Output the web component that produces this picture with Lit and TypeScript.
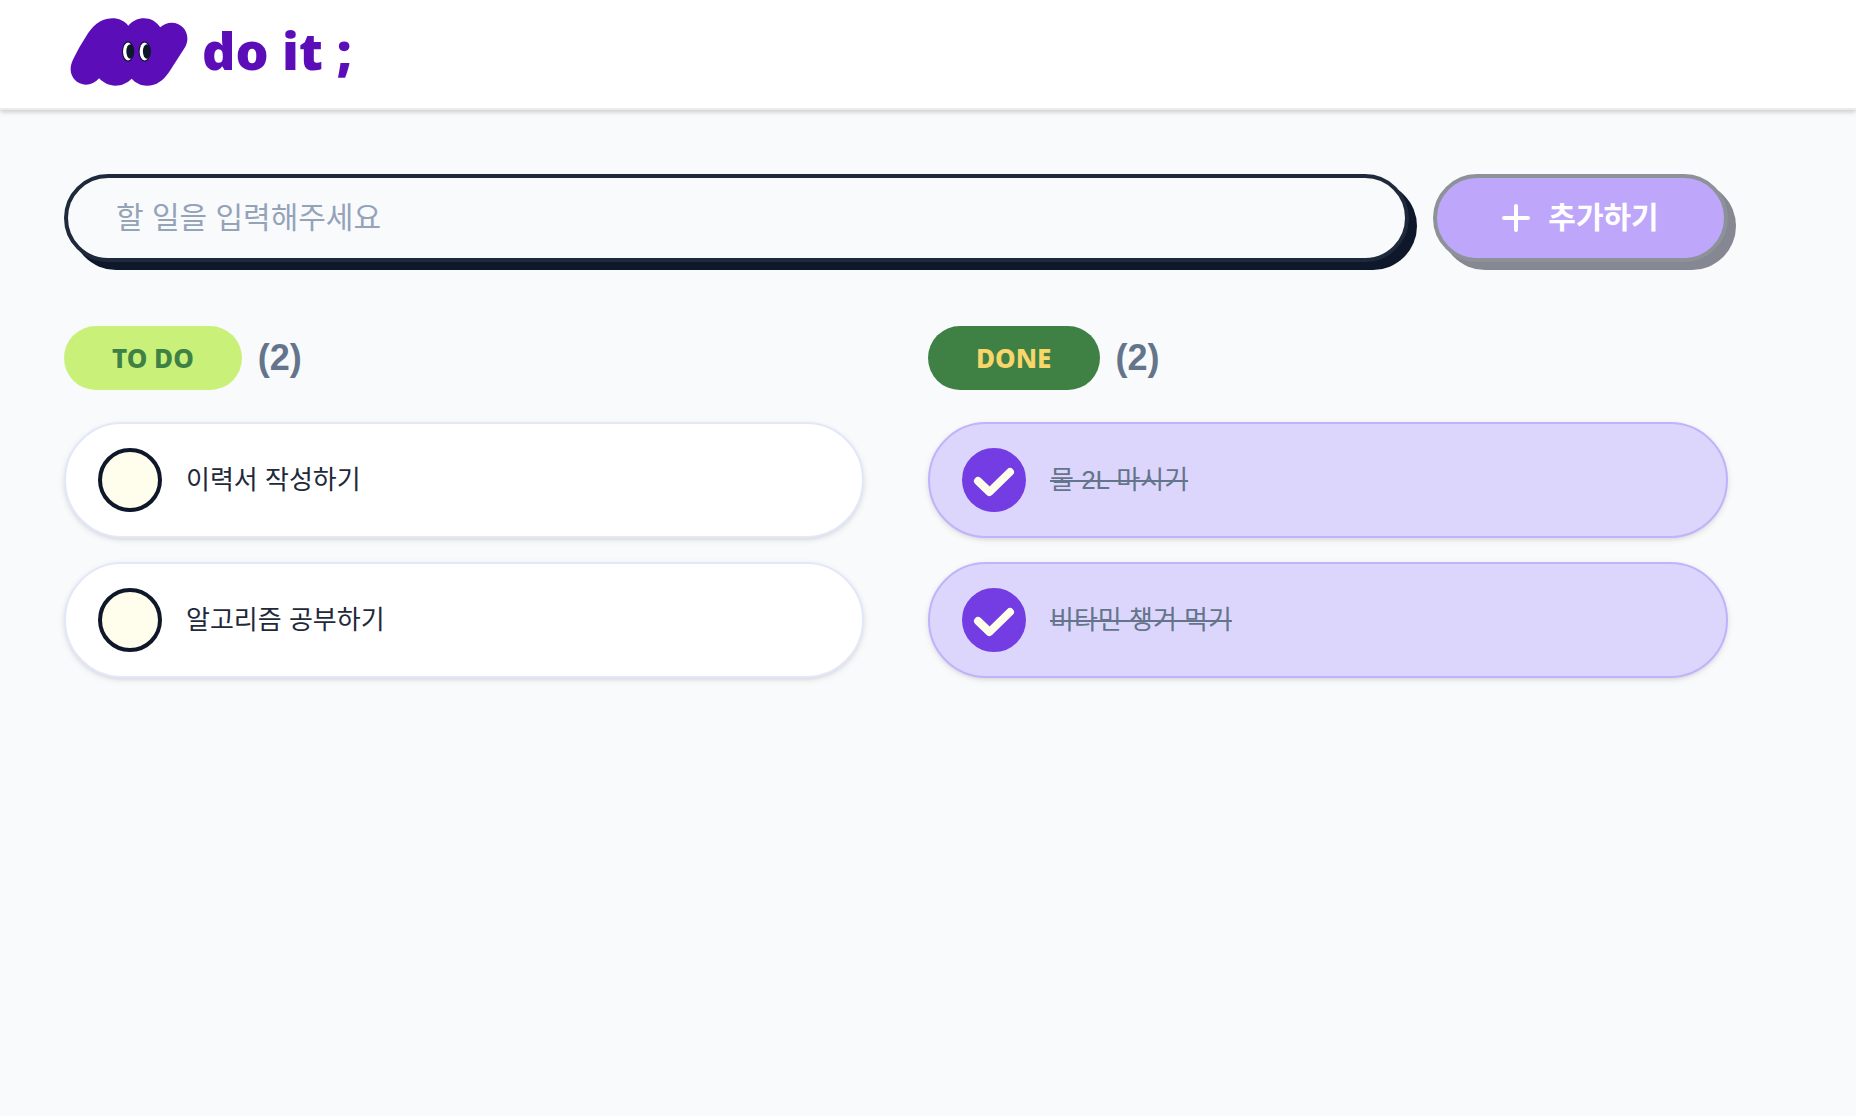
import { LitElement, html, css, svg } from "lit";
import { customElement, property, state } from "lit/decorators.js";

interface Todo {
  id: number;
  name: string;
  done: boolean;
}

@customElement("app-logo")
export class AppLogo extends LitElement {
  static styles = css`
    :host {
      display: flex;
    }
    .link {
      display: flex;
      align-items: center;
      gap: 14px;
      color: #5b0eb8;
      text-decoration: none;
    }
    .mark {
      display: block;
      width: 118px;
      height: 68px;
    }
    .name {
      font: 800 52px/64px "Open Sans", "Noto Sans", sans-serif;
      padding-bottom: 4px;
    }
  `;

  private eye(x: number) {
    return svg`
      <ellipse cx=${x} cy="155" rx="18" ry="31" fill="#0f172a" />
      <ellipse cx=${x} cy="155" rx="15" ry="27" fill="#fff" />
      <ellipse cx=${x + 7} cy="155" rx="12" ry="22" fill="#0f172a" />
    `;
  }

  render() {
    return html`
      <a class="link" href="/">
        <svg class="mark" viewBox="60 54 354 205" aria-hidden="true">
          <path
            fill="#5b0eb8"
            d="M61 208C61 195 66 184 71 174Q86 142 106 112C126 80 148 55 187 55C206 55 224 63 235 77C247 63 264 55 282 55C302 55 320 65 331 82C340 73 353 68 366 68C392 68 413 89 413 115C413 126 410 136 404 145L357 218C340 242 320 258 291 258C273 258 257 250 245 237C232 250 215 258 196 258C177 258 160 250 147 236C136 248 122 255 107 255C81 255 61 234 61 208Z"
          />
          ${this.eye(234)} ${this.eye(284)}
        </svg>
        <span class="name">do it ;</span>
      </a>
    `;
  }
}

@customElement("todo-item")
export class TodoItem extends LitElement {
  @property({ attribute: false }) todo!: Todo;

  static styles = css`
    :host {
      display: block;
    }
    .card {
      display: flex;
      align-items: center;
      gap: 24px;
      padding: 24px 32px;
      border: 2px solid #e2e8f9;
      border-radius: 60px;
      background: #fff;
      box-shadow: 0 2px 6px rgb(0 0 0 / 0.1), 0 2px 4px -2px rgb(0 0 0 / 0.1);
      color: #1e293b;
      font-size: 26px;
      line-height: 32px;
      cursor: pointer;
    }
    .card.done {
      border-color: #c1b2fb;
      background: #ddd6fc;
      color: #64748b;
      text-decoration: line-through;
      text-decoration-thickness: 2px;
    }
    .check {
      display: grid;
      flex: none;
    }
    .box,
    .tick {
      grid-area: 1 / 1;
      width: 64px;
      height: 64px;
    }
    .box {
      appearance: none;
      box-sizing: border-box;
      margin: 0;
      border: 4px solid #0f172a;
      border-radius: 50%;
      background: #fffdeb;
      cursor: pointer;
    }
    .box:checked {
      border-color: #743ce3;
      background: #743ce3;
    }
    .tick {
      pointer-events: none;
      fill: none;
      stroke: #fffdeb;
      stroke-width: 8;
      stroke-linecap: round;
      stroke-linejoin: round;
    }
  `;

  private toggle() {
    this.dispatchEvent(new CustomEvent("toggle-todo", { detail: this.todo.id }));
  }

  render() {
    const { name, done } = this.todo;
    return html`
      <label class="card ${done ? "done" : ""}">
        <span class="check">
          <input class="box" type="checkbox" .checked=${done} @change=${this.toggle} />
          ${done
            ? html`<svg class="tick" viewBox="0 0 64 64" aria-hidden="true">
                <path d="M16 33l11.5 11L48 24" />
              </svg>`
            : null}
        </span>
        <span>${name}</span>
      </label>
    `;
  }
}

@customElement("app-root")
export class AppRoot extends LitElement {
  @state() private draft = "";
  @state() private todos: Todo[] = [
    { id: 1, name: "이력서 작성하기", done: false },
    { id: 2, name: "알고리즘 공부하기", done: false },
    { id: 3, name: "물 2L 마시기", done: true },
    { id: 4, name: "비타민 챙겨 먹기", done: true },
  ];

  static styles = css`
    :host {
      display: block;
      min-height: 100vh;
      background: #f9fafc;
      font-family: "Liberation Sans", "Noto Sans CJK KR", sans-serif;
    }
    .header {
      padding: 18px 70px 22px;
      border-bottom: 2px solid #ebebed;
      background: #fff;
      box-shadow: 0 2px 6px rgb(0 0 0 / 0.1), 0 2px 4px rgb(0 0 0 / 0.1);
    }
    .main {
      padding: 64px 128px 64px 64px;
    }
    .form {
      display: flex;
      gap: 24px;
      margin-bottom: 64px;
    }
    .field,
    .add {
      box-sizing: border-box;
      height: 88px;
      border: 4px solid #1e293b;
      border-radius: 44px;
      box-shadow: 8px 8px 0 #0f172a;
      font-family: inherit;
      font-size: 30px;
      line-height: 40px;
    }
    .field {
      flex: 1;
      min-width: 0;
      padding: 0 48px;
      background: #f9fafc;
      color: #1e293b;
      outline: none;
    }
    .field::placeholder {
      color: #94a3b8;
      opacity: 1;
    }
    .add {
      display: flex;
      flex: none;
      align-items: center;
      justify-content: center;
      gap: 18px;
      width: 295px;
      background: #7c3aed;
      color: #fff;
      font-weight: 700;
      cursor: pointer;
    }
    .add:disabled {
      border-color: #8c9298;
      background: #bea7fb;
      box-shadow: 8px 8px 0 #858792;
      cursor: default;
    }
    .plus {
      width: 28px;
      height: 28px;
      fill: none;
      stroke: currentColor;
      stroke-width: 4;
      stroke-linecap: round;
    }
    .columns {
      display: grid;
      grid-template-columns: repeat(2, minmax(0, 1fr));
      gap: 64px;
    }
    .heading {
      display: flex;
      align-items: center;
      gap: 16px;
      margin: 0 0 32px;
    }
    .pill {
      padding: 0 48px;
      border-radius: 32px;
      background: #c9f179;
      color: #3f8145;
      font: 800 26px/64px "Noto Sans", "Open Sans", sans-serif;
    }
    .pill.done {
      background: #3f8145;
      color: #f8d66a;
    }
    .count {
      color: #64748b;
      font: 700 36px/40px "Liberation Sans", sans-serif;
    }
    .list {
      display: grid;
      gap: 24px;
      margin: 0;
      padding: 0;
      list-style: none;
    }
  `;

  private submit(e: Event) {
    e.preventDefault();
    const name = this.draft.trim();
    if (!name) return;
    this.todos = [...this.todos, { id: Date.now(), name, done: false }];
    this.draft = "";
  }

  private toggle(e: CustomEvent<number>) {
    this.todos = this.todos.map((t) => (t.id === e.detail ? { ...t, done: !t.done } : t));
  }

  private column(title: string, done: boolean) {
    const items = this.todos.filter((t) => t.done === done);
    return html`
      <section>
        <h2 class="heading">
          <span class="pill ${done ? "done" : ""}">${title}</span>
          <span class="count">(${items.length})</span>
        </h2>
        <ul class="list">
          ${items.map(
            (t) => html`<li><todo-item .todo=${t} @toggle-todo=${this.toggle}></todo-item></li>`
          )}
        </ul>
      </section>
    `;
  }

  render() {
    return html`
      <header class="header"><app-logo></app-logo></header>
      <main class="main">
        <form class="form" @submit=${this.submit}>
          <input
            class="field"
            type="text"
            aria-label="할 일"
            placeholder="할 일을 입력해주세요"
            .value=${this.draft}
            @input=${(e: Event) => (this.draft = (e.target as HTMLInputElement).value)}
          />
          <button class="add" type="submit" ?disabled=${!this.draft.trim()}>
            <svg class="plus" viewBox="0 0 28 28" aria-hidden="true">
              <path d="M14 2v24M2 14h24" />
            </svg>
            추가하기
          </button>
        </form>
        <div class="columns">${this.column("TO DO", false)} ${this.column("DONE", true)}</div>
      </main>
    `;
  }
}
